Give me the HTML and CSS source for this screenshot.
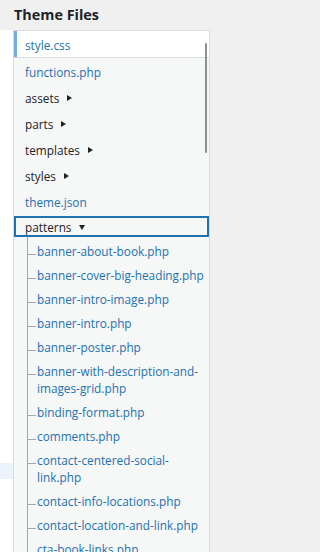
FILE: index.html
```html
<!DOCTYPE html>
<html lang="en">
<head>
<meta charset="utf-8">
<title>Theme Files</title>
<link rel="stylesheet" href="styles.css">
</head>
<body>
<h2 class="title">Theme Files</h2>
<div class="main">
  <div class="edge"><div class="edge-hl"></div></div>
  <div class="panel">
    <ul class="tree">
      <li><a class="file current">style.css</a></li>
      <li><a class="file">functions.php</a></li>
      <li><span class="folder">assets<i class="tri-r"></i></span></li>
      <li><span class="folder">parts<i class="tri-r"></i></span></li>
      <li><span class="folder">templates<i class="tri-r"></i></span></li>
      <li><span class="folder">styles<i class="tri-r"></i></span></li>
      <li><a class="file">theme.json</a></li>
      <li>
        <span class="folder focused">patterns<i class="tri-d"></i></span>
        <ul class="sub">
          <li><a class="sfile">banner-about-book.php</a></li>
          <li><a class="sfile">banner-cover-big-heading.php</a></li>
          <li><a class="sfile">banner-intro-image.php</a></li>
          <li><a class="sfile">banner-intro.php</a></li>
          <li><a class="sfile">banner-poster.php</a></li>
          <li><a class="sfile">banner-with-description-and-images-grid.php</a></li>
          <li><a class="sfile">binding-format.php</a></li>
          <li><a class="sfile">comments.php</a></li>
          <li><a class="sfile">contact-centered-social-link.php</a></li>
          <li><a class="sfile">contact-info-locations.php</a></li>
          <li><a class="sfile">contact-location-and-link.php</a></li>
          <li><a class="sfile">cta-book-links.php</a></li>
          <li><a class="sfile">cta-book-locations.php</a></li>
          <li><a class="sfile">cta-centered-heading.php</a></li>
        </ul>
      </li>
    </ul>
    <div class="scrollbar"></div>
  </div>
</div>
</body>
</html>
```
FILE: styles.css
```css
html, body {
  margin: 0;
  padding: 0;
  overflow: hidden;
}
body {
  background: #f0f0f1;
  font-family: "Open Sans", "Noto Sans", sans-serif;
  color: #1d2327;
}
.title {
  margin: 0;
  height: 30px;
  box-sizing: border-box;
  padding: 5px 0 5px 14px;
  font-size: 14.4px;
  line-height: 20px;
  font-weight: 700;
  color: #1d2327;
}
.main {
  display: flex;
  height: 522px;
  overflow: hidden;
}
.edge {
  width: 13px;
  background: #fff;
  padding-top: 433px;
  box-sizing: border-box;
}
.edge-hl {
  height: 16px;
  background: #eaf2fb;
}
.panel {
  position: relative;
  width: 197px;
  box-sizing: border-box;
  border: 1px solid #dcdcde;
  border-bottom: none;
  background: #f6f7f7;
  overflow: hidden;
}
.tree, .sub {
  list-style: none;
  margin: 0;
  padding: 0;
}
.tree > li > .file,
.tree > li > .folder {
  display: block;
  padding: 5px 0 3px 11px;
  font-size: 11.8px;
  line-height: 18px;
}
.file, .sfile {
  color: #2271b1;
  text-decoration: none;
}
.folder {
  color: #1d2327;
}
.tree > li > .current {
  background: #fff;
  box-shadow: inset 3px 0 0 #72aee6;
  border-bottom: 1px solid #dcdcde;
}
.tree > li > .focused {
  margin-top: 2px;
  padding: 2px 0 1px 11px;
  box-shadow: inset 0 0 0 2px #2271b1;
}
.tri-r {
  display: inline-block;
  width: 0;
  height: 0;
  margin-left: 8px;
  border-left: 5px solid #1d2327;
  border-top: 3px solid transparent;
  border-bottom: 3px solid transparent;
  vertical-align: 2px;
}
.tri-d {
  display: inline-block;
  width: 0;
  height: 0;
  margin-left: 7px;
  border-top: 5px solid #1d2327;
  border-left: 3px solid transparent;
  border-right: 3px solid transparent;
  vertical-align: 2px;
}
.sub {
  margin-left: 13px;
  padding-top: 2px;
  border-left: 1px solid #a7aaad;
}
.sfile {
  display: block;
  padding: 4px 0 3px 9px;
  font-size: 11.8px;
  line-height: 17px;
}
.sfile::before {
  content: "";
  display: inline-block;
  width: 8px;
  height: 1px;
  margin-left: -9px;
  margin-right: 1px;
  background: #a7aaad;
  vertical-align: 1px;
}
.scrollbar {
  position: absolute;
  left: 191px;
  top: 12px;
  width: 2px;
  height: 110px;
  border-radius: 1px;
  background: #8c8f94;
}
```
